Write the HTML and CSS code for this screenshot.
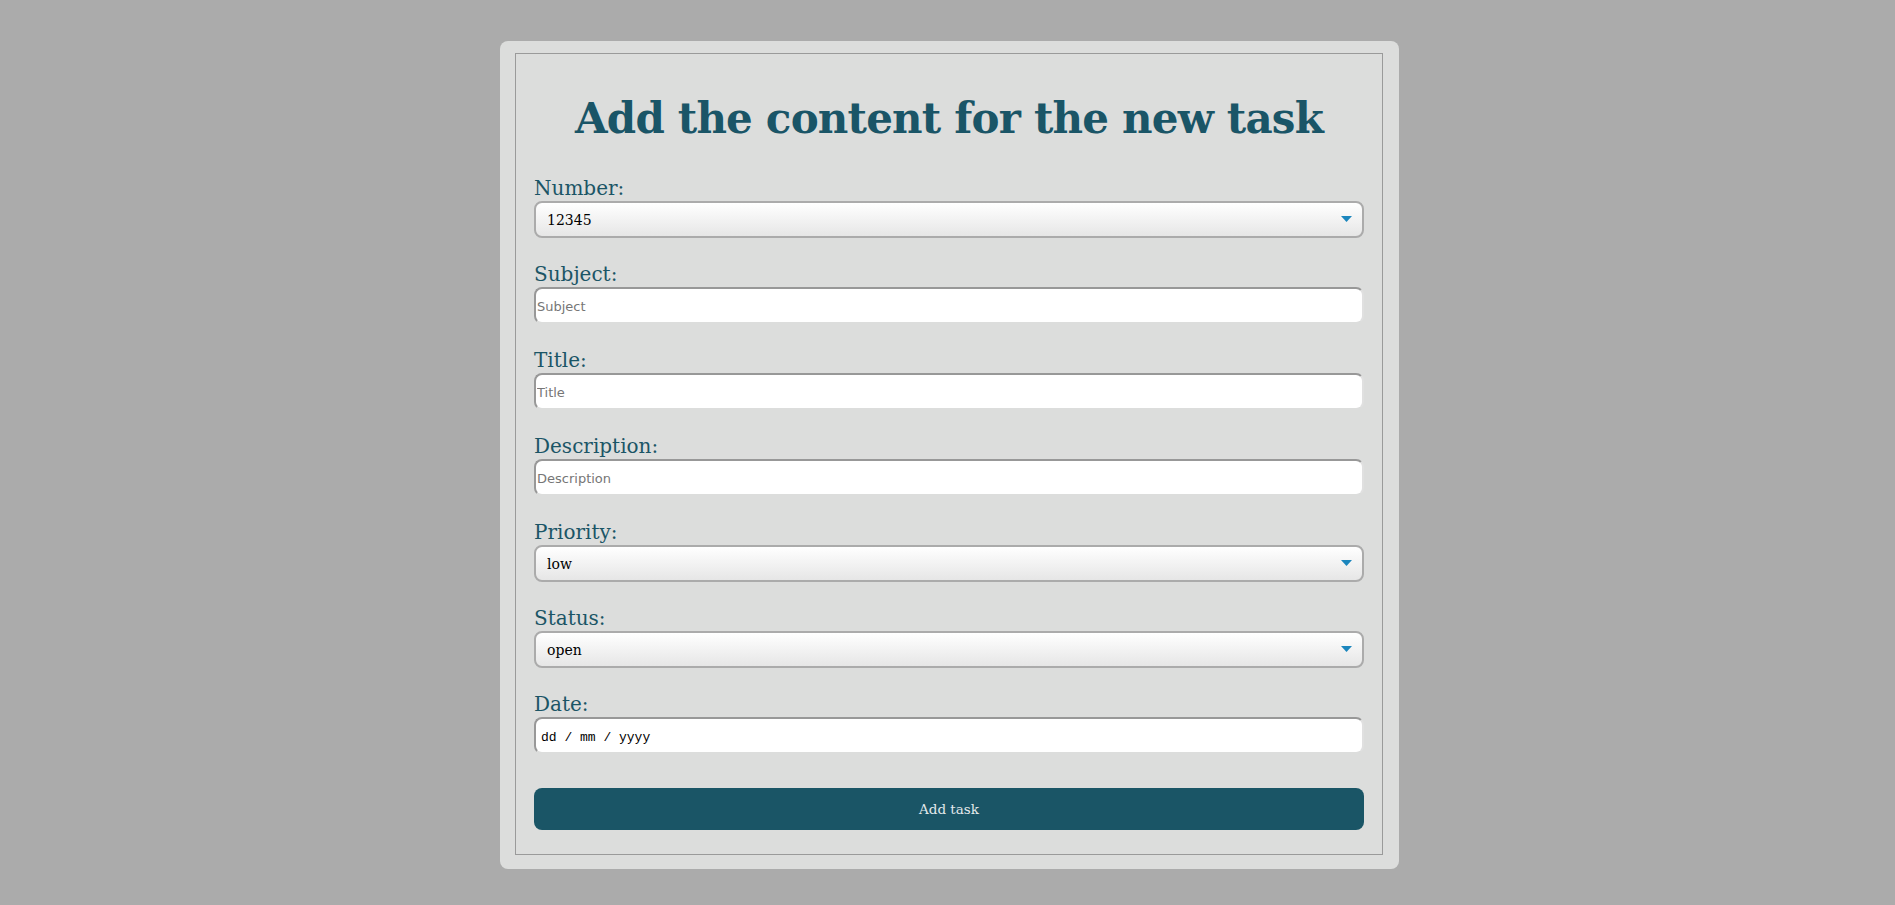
FILE: index.html
```html
<!DOCTYPE html>
<html lang="en">
<head>
<meta charset="utf-8">
<title>Add task</title>
<link rel="stylesheet" href="styles.css">
</head>
<body>
<div class="page">
  <div class="card">
    <form class="task-form">
      <fieldset class="frame">
        <h1 class="title">Add the content for the new task</h1>
        <div class="field">
          <label class="label" for="number">Number:</label>
          <div class="select-wrap">
            <select id="number" class="select"><option>12345</option></select>
            <svg class="arrow" width="11" height="6" viewBox="0 0 11 6"><path d="M0 0H11L5.5 6Z" fill="#1b86bd"/></svg>
          </div>
        </div>
        <div class="field">
          <label class="label" for="subject">Subject:</label>
          <input id="subject" class="input" type="text" placeholder="Subject">
        </div>
        <div class="field">
          <label class="label" for="title">Title:</label>
          <input id="title" class="input" type="text" placeholder="Title">
        </div>
        <div class="field">
          <label class="label" for="description">Description:</label>
          <input id="description" class="input" type="text" placeholder="Description">
        </div>
        <div class="field">
          <label class="label" for="priority">Priority:</label>
          <div class="select-wrap">
            <select id="priority" class="select"><option>low</option></select>
            <svg class="arrow" width="11" height="6" viewBox="0 0 11 6"><path d="M0 0H11L5.5 6Z" fill="#1b86bd"/></svg>
          </div>
        </div>
        <div class="field">
          <label class="label" for="status">Status:</label>
          <div class="select-wrap">
            <select id="status" class="select"><option>open</option></select>
            <svg class="arrow" width="11" height="6" viewBox="0 0 11 6"><path d="M0 0H11L5.5 6Z" fill="#1b86bd"/></svg>
          </div>
        </div>
        <div class="field">
          <label class="label" for="date">Date:</label>
          <div class="input date-input" id="date">dd / mm / yyyy</div>
        </div>
        <button type="button" class="submit">Add task</button>
      </fieldset>
    </form>
  </div>
</div>
</body>
</html>
```
FILE: styles.css
```css
html, body {
  margin: 0;
  padding: 0;
  background: #ababab;
  height: 100%;
}
.page {
  display: flex;
  justify-content: center;
  padding: 41px 0 0 4px;
  box-sizing: border-box;
}
.card {
  width: 899px;
  box-sizing: border-box;
  background: #dcdddc;
  border-radius: 8px;
  padding: 12px 16px 14px 15px;
}
.task-form {
  margin: 0;
}
.frame {
  margin: 0;
  border: 1px solid #9a9a9a;
  padding: 0 18px 24px 18px;
  display: flex;
  flex-direction: column;
  min-width: 0;
}
.title {
  margin: 39px 0 30px 0;
  font-family: "DejaVu Serif", serif;
  font-weight: bold;
  font-size: 42px;
  letter-spacing: -0.8px;
  line-height: 52px;
  color: #1a5567;
  text-align: center;
}
.field {
  display: flex;
  flex-direction: column;
  margin-bottom: 23px;
}
.label {
  font-family: "DejaVu Serif", serif;
  font-size: 20px;
  line-height: 26px;
  height: 26px;
  color: #1b5566;
}
.select-wrap {
  position: relative;
  height: 37px;
}
.select {
  appearance: none;
  -webkit-appearance: none;
  width: 100%;
  height: 37px;
  box-sizing: border-box;
  border: 2px solid #ababab;
  border-radius: 8px;
  background: linear-gradient(#ffffff, #e6e6e6);
  padding: 0 30px 0 11px;
  font-family: "DejaVu Serif", serif;
  font-size: 14px;
  color: #000;
  margin: 0;
}
.arrow {
  position: absolute;
  right: 12px;
  top: 15px;
  pointer-events: none;
}
.input {
  height: 37px;
  width: 100%;
  box-sizing: border-box;
  margin: 0;
  border-width: 2px;
  border-style: solid;
  border-color: #989898 #e0e0e0 #dcdddc #989898;
  border-radius: 8px;
  background: #ffffff;
  padding: 2px 2px 0 1px;
  font-family: "DejaVu Sans", sans-serif;
  font-size: 13px;
  color: #000;
  outline: none;
}
.input::placeholder {
  color: #767676;
}
.date-input {
  display: flex;
  align-items: center;
  padding: 3px 5px 0 5px;
  font-family: "Liberation Mono", monospace;
  font-size: 13px;
  color: #000;
}
.submit {
  margin: 11px 0 0 0;
  height: 42px;
  width: 100%;
  border: none;
  border-radius: 8px;
  background: #1a5566;
  color: #e4eaec;
  font-family: "DejaVu Serif", serif;
  font-size: 13.5px;
  padding: 0;
}
```
